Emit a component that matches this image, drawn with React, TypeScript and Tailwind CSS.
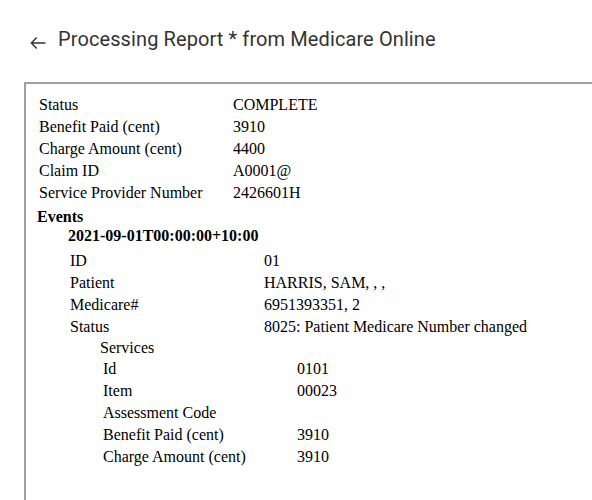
import React from 'react';

type Row = [string, string];

const claimRows: Row[] = [
  ['Status', 'COMPLETE'],
  ['Benefit Paid (cent)', '3910'],
  ['Charge Amount (cent)', '4400'],
  ['Claim ID', 'A0001@'],
  ['Service Provider Number', '2426601H'],
];

const eventRows: Row[] = [
  ['ID', '01'],
  ['Patient', 'HARRIS, SAM, , ,'],
  ['Medicare#', '6951393351, 2'],
  ['Status', '8025: Patient Medicare Number changed'],
];

const serviceRows: Row[] = [
  ['Id', '0101'],
  ['Item', '00023'],
  ['Assessment Code', ''],
  ['Benefit Paid (cent)', '3910'],
  ['Charge Amount (cent)', '3910'],
];

const Fields: React.FC<{ rows: Row[] }> = ({ rows }) => (
  <div className="flex flex-col">
    {rows.map(([label, value]) => (
      <div key={label} className="flex h-[22px] leading-[22px] whitespace-nowrap">
        <span className="w-[194px] shrink-0">{label}</span>
        <span>{value}</span>
      </div>
    ))}
  </div>
);

const App: React.FC = () => {
  return (
    <div className="w-[592px] h-[500px] overflow-hidden bg-white">
      {/* header */}
      <div className="flex items-center h-[28px] mt-[25px] pl-[28px]">
        <svg className="w-[20px] h-[20px] mt-[8px] text-[#333]" viewBox="0 0 24 24" fill="none" stroke="currentColor" strokeWidth="1.7">
          <path d="M21 12H4M10.5 5.5 4 12l6.5 6.5" />
        </svg>
        <h1 className="ml-[10px] text-[20px] text-[#333] font-['Roboto',sans-serif] tracking-[0.1px]">
          Processing Report * from Medicare Online
        </h1>
      </div>

      {/* report body */}
      <div className="mt-[29px] ml-[24px] w-[600px] h-[420px] border-2 border-r-0 border-b-0 border-[#a0a0a0] pt-[10px] pl-[13px] text-[16px] text-black font-['Liberation_Serif',serif]">
        <Fields rows={claimRows} />

        <div className="mt-[3px] -ml-[2px] font-bold leading-[19px]">Events</div>
        <div className="ml-[29px] font-bold leading-[20px]">2021-09-01T00:00:00+10:00</div>

        <div className="ml-[31px] mt-[4px]">
          <Fields rows={eventRows} />
          <div className="ml-[30px] leading-[20px]">Services</div>
          <div className="ml-[33px]">
            <Fields rows={serviceRows} />
          </div>
        </div>
      </div>
    </div>
  );
};

export default App;
